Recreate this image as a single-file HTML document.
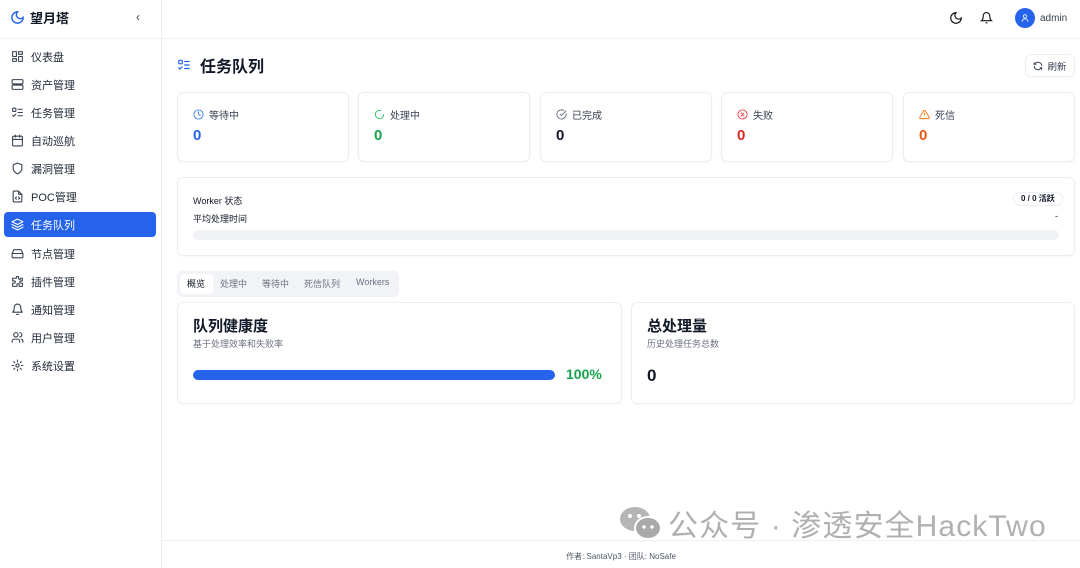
<!DOCTYPE html>
<html><head><meta charset="utf-8"><style>
*{box-sizing:border-box;margin:0;padding:0}
body{width:1080px;height:568px;overflow:hidden;background:#fff;font-family:"Liberation Sans","Noto Sans CJK SC",sans-serif;color:#111827;position:relative}
.abs{position:absolute}
.sb{left:0;top:0;width:162px;height:568px;border-right:1px solid #eceef2;background:#fff}
.logo{left:10px;top:8px;font-size:13px;font-weight:700;display:flex;align-items:center;gap:5px}
.hline{left:0;top:38px;width:1080px;height:1px;background:#eef0f3}
.nav{left:4px;width:152px;height:25px;display:flex;align-items:center;padding-left:7px;font-size:11px;color:#1f2937;gap:7px;border-radius:4px}
.nav svg{width:13px;height:13px;fill:none;stroke:#374151;stroke-width:2;stroke-linecap:round;stroke-linejoin:round}
.nav.act{background:#2563eb;color:#fff}
.nav.act svg{stroke:#fff}
.card{border:1px solid #eceef2;border-radius:6px;background:#fff;box-shadow:0 1px 2px rgba(0,0,0,.03)}
.st{top:92px;width:172px;height:70px}
.st .l{position:absolute;left:15px;top:14px;font-size:10px;color:#374151;display:flex;align-items:center;gap:5px}
.st .v{position:absolute;left:15px;top:34px;font-size:15px;font-weight:700}
.st svg{width:11px;height:11px;fill:none;stroke-width:2;stroke-linecap:round}
</style></head><body>
<div class="abs sb"></div>
<div class="abs logo"><svg width="15" height="15" viewBox="0 0 24 24" fill="none" stroke="#2563eb" stroke-width="2.3" stroke-linecap="round"><path d="M12 3a6 6 0 0 0 9 9 9 9 0 1 1-9-9z"/></svg>望月塔</div>
<div class="abs" style="left:136px;top:10px;font-size:12px;color:#374151">‹</div>
<div class="abs hline"></div>

<div class="abs nav" style="top:44px"><svg viewBox="0 0 24 24"><rect x="3" y="3" width="7" height="9"/><rect x="14" y="3" width="7" height="5"/><rect x="14" y="12" width="7" height="9"/><rect x="3" y="16" width="7" height="5"/></svg>仪表盘</div>
<div class="abs nav" style="top:72px"><svg viewBox="0 0 24 24"><rect x="2" y="3" width="20" height="8" rx="2"/><rect x="2" y="13" width="20" height="8" rx="2"/></svg>资产管理</div>
<div class="abs nav" style="top:100px"><svg viewBox="0 0 24 24"><rect x="3" y="4" width="6" height="6" rx="1"/><path d="m3 17 2 2 4-4M13 6h8M13 12h8M13 18h8"/></svg>任务管理</div>
<div class="abs nav" style="top:128px"><svg viewBox="0 0 24 24"><rect x="3" y="4" width="18" height="18" rx="2"/><path d="M16 2v4M8 2v4M3 10h18"/></svg>自动巡航</div>
<div class="abs nav" style="top:156px"><svg viewBox="0 0 24 24"><path d="M12 22s8-4 8-10V5l-8-3-8 3v7c0 6 8 10 8 10z"/></svg>漏洞管理</div>
<div class="abs nav" style="top:184px"><svg viewBox="0 0 24 24"><path d="M14 2H6a2 2 0 0 0-2 2v16a2 2 0 0 0 2 2h12a2 2 0 0 0 2-2V8z"/><path d="M14 2v6h6M10 13l-2 2 2 2M14 13l2 2-2 2"/></svg>POC管理</div>
<div class="abs nav act" style="top:212px"><svg viewBox="0 0 24 24"><path d="m12 2 10 5-10 5L2 7z"/><path d="m2 12 10 5 10-5M2 17l10 5 10-5"/></svg>任务队列</div>
<div class="abs nav" style="top:241px"><svg viewBox="0 0 24 24"><path d="M22 12H2M5.5 5h13L22 12v6a2 2 0 0 1-2 2H4a2 2 0 0 1-2-2v-6z"/></svg>节点管理</div>
<div class="abs nav" style="top:269px"><svg viewBox="0 0 24 24"><path d="M10 3h4v3a2 2 0 1 0 4 0h3v5h-3a2 2 0 1 0 0 4h3v6h-6v-3a2 2 0 1 0-4 0v3H3v-6h3a2 2 0 1 0 0-4H3V6h7z"/></svg>插件管理</div>
<div class="abs nav" style="top:297px"><svg viewBox="0 0 24 24"><path d="M6 8a6 6 0 0 1 12 0c0 7 3 9 3 9H3s3-2 3-9M10 21h4"/></svg>通知管理</div>
<div class="abs nav" style="top:325px"><svg viewBox="0 0 24 24"><circle cx="9" cy="7" r="4"/><path d="M2 21v-2a4 4 0 0 1 4-4h6a4 4 0 0 1 4 4v2M16 3a4 4 0 0 1 0 8M22 21v-2a4 4 0 0 0-3-4"/></svg>用户管理</div>
<div class="abs nav" style="top:353px"><svg viewBox="0 0 24 24"><circle cx="12" cy="12" r="3"/><path d="M12 2v3M12 19v3M4.9 4.9l2.1 2.1M17 17l2.1 2.1M2 12h3M19 12h3M4.9 19.1 7 17M17 7l2.1-2.1"/></svg>系统设置</div>

<svg class="abs" style="left:949px;top:11px" width="14" height="14" viewBox="0 0 24 24" fill="none" stroke="#111" stroke-width="2"><path d="M12 3a6 6 0 0 0 9 9 9 9 0 1 1-9-9z"/></svg>
<svg class="abs" style="left:980px;top:11px" width="13" height="14" viewBox="0 0 24 24" fill="none" stroke="#111" stroke-width="2"><path d="M6 8a6 6 0 0 1 12 0c0 7 3 9 3 9H3s3-2 3-9M10 21h4"/></svg>
<div class="abs" style="left:1015px;top:8px;width:20px;height:20px;border-radius:50%;background:#2563eb"></div>
<svg class="abs" style="left:1020px;top:13px" width="10" height="10" viewBox="0 0 24 24" fill="none" stroke="#fff" stroke-width="2"><circle cx="12" cy="8" r="4"/><path d="M5 21a7 7 0 0 1 14 0"/></svg>
<div class="abs" style="left:1040px;top:13px;font-size:10px;color:#374151">admin</div>

<svg class="abs" style="left:177px;top:58px" width="14" height="14" viewBox="0 0 24 24" fill="none" stroke="#2563eb" stroke-width="2" stroke-linecap="round"><rect x="3" y="4" width="6" height="6" rx="1"/><path d="m3 17 2 2 4-4M13 6h8M13 12h8M13 18h8"/></svg>
<div class="abs" style="left:200px;top:53px;font-size:16px;font-weight:700">任务队列</div>
<div class="abs card" style="left:1025px;top:54px;width:50px;height:23px;font-size:9.5px;color:#374151;display:flex;align-items:center;justify-content:center;gap:4px"><svg width="10" height="10" viewBox="0 0 24 24" fill="none" stroke="#374151" stroke-width="2.3"><path d="M21 12a9 9 0 0 0-15-6.7L3 8M3 3v5h5M3 12a9 9 0 0 0 15 6.7L21 16M21 21v-5h-5"/></svg>刷新</div>

<div class="abs card st" style="left:177px"><div class="l"><svg viewBox="0 0 24 24" stroke="#3b82f6"><circle cx="12" cy="12" r="10"/><path d="M12 6v6l4 2"/></svg>等待中</div><div class="v" style="color:#2563eb">0</div></div>
<div class="abs card st" style="left:358px"><div class="l"><svg viewBox="0 0 24 24" stroke="#22c55e"><path d="M21 12a9 9 0 1 1-6.2-8.6"/></svg>处理中</div><div class="v" style="color:#16a34a">0</div></div>
<div class="abs card st" style="left:540px"><div class="l"><svg viewBox="0 0 24 24" stroke="#6b7280"><path d="M21.8 10A10 10 0 1 1 17 3.3"/><path d="m9 11 3 3L22 4"/></svg>已完成</div><div class="v" style="color:#111827">0</div></div>
<div class="abs card st" style="left:721px"><div class="l"><svg viewBox="0 0 24 24" stroke="#ef4444"><circle cx="12" cy="12" r="10"/><path d="m15 9-6 6M9 9l6 6"/></svg>失败</div><div class="v" style="color:#dc2626">0</div></div>
<div class="abs card st" style="left:903px"><div class="l"><svg viewBox="0 0 24 24" stroke="#f97316"><path d="M10.3 3.9 1.8 18a2 2 0 0 0 1.7 3h17a2 2 0 0 0 1.7-3L13.7 3.9a2 2 0 0 0-3.4 0zM12 9v4M12 17h0"/></svg>死信</div><div class="v" style="color:#ea580c">0</div></div>

<div class="abs card" style="left:177px;top:177px;width:898px;height:79px"></div>
<div class="abs" style="left:193px;top:194px;font-size:9px;color:#111827">Worker 状态</div>
<div class="abs" style="left:193px;top:212px;font-size:9px;color:#111827">平均处理时间</div>
<div class="abs" style="left:1013px;top:192px;height:14px;padding:0 7px;border:1px solid #eceef2;border-radius:7px;font-size:8px;font-weight:700;line-height:12px">0 / 0 活跃</div>
<div class="abs" style="left:1055px;top:211px;font-size:9px">-</div>
<div class="abs" style="left:193px;top:230px;width:866px;height:10px;border-radius:5px;background:#f0f2f6"></div>

<div class="abs" style="left:177px;top:271px;width:222px;height:26px;background:#f1f3f7;border-radius:5px"></div>
<div class="abs" style="left:180px;top:274px;width:33px;height:20px;background:#fff;border-radius:4px"></div>
<div class="abs" style="left:187px;top:277px;font-size:9px;color:#111827">概览</div>
<div class="abs" style="left:220px;top:277px;font-size:9px;color:#6b7280">处理中</div>
<div class="abs" style="left:262px;top:277px;font-size:9px;color:#6b7280">等待中</div>
<div class="abs" style="left:304px;top:277px;font-size:9px;color:#6b7280">死信队列</div>
<div class="abs" style="left:356px;top:277px;font-size:9px;color:#6b7280">Workers</div>

<div class="abs card" style="left:177px;top:302px;width:445px;height:102px"></div>
<div class="abs" style="left:193px;top:315px;font-size:15px;font-weight:700">队列健康度</div>
<div class="abs" style="left:193px;top:337px;font-size:9px;color:#6b7280">基于处理效率和失败率</div>
<div class="abs" style="left:193px;top:370px;width:362px;height:10px;border-radius:5px;background:#2563eb"></div>
<div class="abs" style="left:566px;top:366px;font-size:14px;font-weight:700;color:#16a34a">100%</div>

<div class="abs card" style="left:631px;top:302px;width:444px;height:102px"></div>
<div class="abs" style="left:647px;top:315px;font-size:15px;font-weight:700">总处理量</div>
<div class="abs" style="left:647px;top:337px;font-size:9px;color:#6b7280">历史处理任务总数</div>
<div class="abs" style="left:647px;top:366px;font-size:17px;font-weight:700">0</div>

<div class="abs" style="left:162px;top:540px;width:918px;height:1px;background:#eef0f3"></div>
<svg class="abs" style="left:619px;top:505px" width="44" height="36" viewBox="0 0 44 36"><ellipse cx="16" cy="14" rx="15" ry="12" fill="#b5b5b5"/><ellipse cx="29" cy="23" rx="13" ry="11" fill="#a9a9a9" stroke="#fff" stroke-width="2"/><circle cx="11" cy="11" r="2" fill="#fff"/><circle cx="20" cy="11" r="2" fill="#fff"/><circle cx="25" cy="22" r="1.7" fill="#fff"/><circle cx="33" cy="22" r="1.7" fill="#fff"/></svg>
<div class="abs" style="left:668px;top:501px;font-size:30px;color:#b0b0b0;letter-spacing:1.1px;white-space:nowrap">公众号 · 渗透安全HackTwo</div>

<div class="abs" style="left:162px;top:551px;width:918px;text-align:center;font-size:8px;color:#4b5563">作者: SantaVp3 · 团队: NoSafe</div>
</body></html>
